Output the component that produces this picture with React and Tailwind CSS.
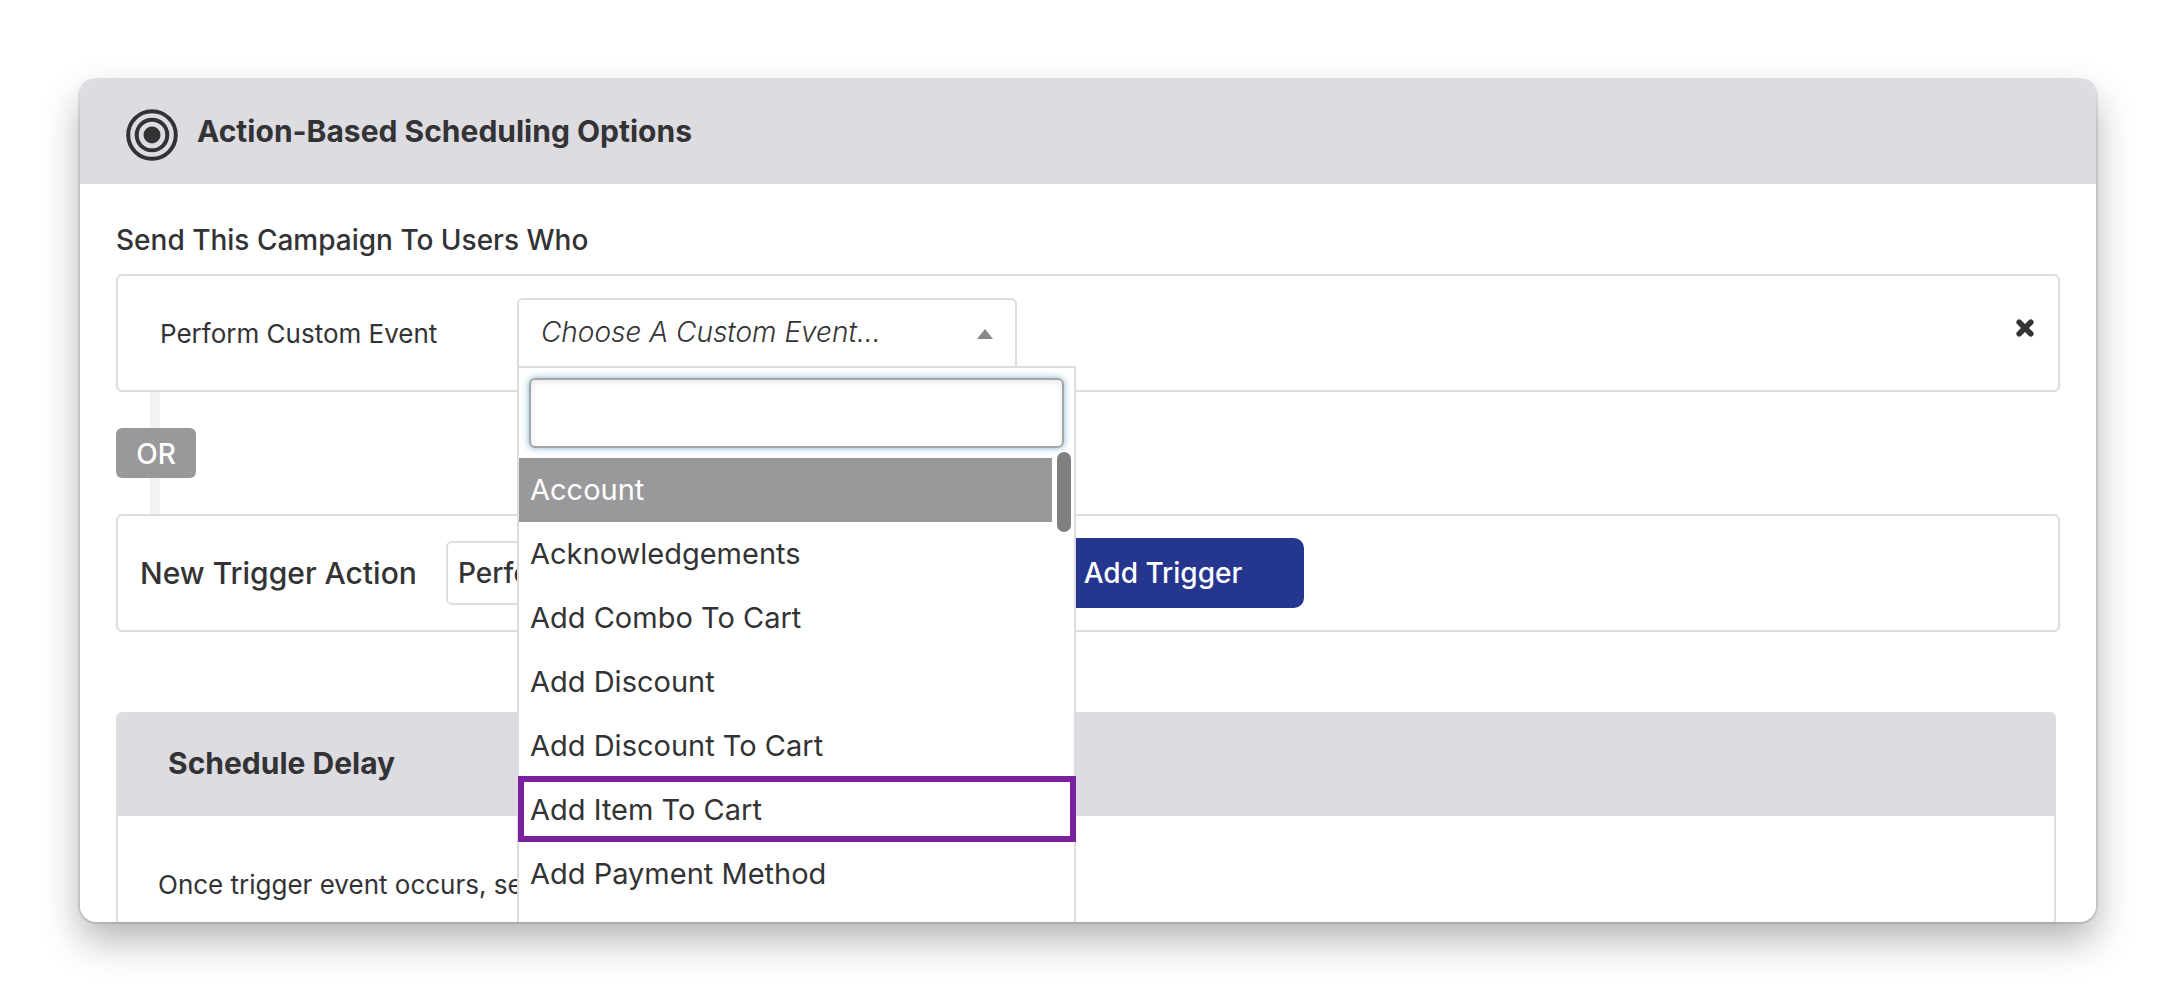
import React from "react";

const EVENTS = [
  "Account",
  "Acknowledgements",
  "Add Combo To Cart",
  "Add Discount",
  "Add Discount To Cart",
  "Add Item To Cart",
  "Add Payment Method",
];

function TargetIcon() {
  return (
    <svg viewBox="0 0 52 52" className="mt-2 size-[52px] shrink-0" fill="none" stroke="currentColor" strokeWidth="4" aria-hidden="true">
      <circle cx="26" cy="26" r="23.8" />
      <circle cx="26" cy="26" r="15.3" />
      <circle cx="26" cy="26" r="8.5" fill="currentColor" stroke="none" />
    </svg>
  );
}

function CrossIcon() {
  return (
    <svg viewBox="0 0 18 18" className="size-[18px]" stroke="currentColor" strokeWidth="5.6" strokeLinecap="round" aria-hidden="true">
      <path d="M3.2 3.2 L14.8 14.8 M14.8 3.2 L3.2 14.8" />
    </svg>
  );
}

function EventOption({ name }) {
  const base = "relative flex h-16 items-center pl-[11px]";
  if (name === "Account") {
    return (
      <li role="option" aria-selected="true" className={`${base} mr-[22px] bg-[#99999b] text-white`}>
        {name}
      </li>
    );
  }
  return (
    <li role="option" aria-selected="false" className={base}>
      {name}
      {name === "Add Item To Cart" && (
        <span className="absolute -top-0.5 -right-0.5 bottom-0 -left-px border-[6px] border-[#7b219f]" />
      )}
    </li>
  );
}

function EventPicker() {
  return (
    <div className="relative w-[500px]">
      <button
        type="button"
        aria-haspopup="listbox"
        aria-expanded="true"
        className="flex h-[70px] w-full items-center justify-between rounded-t-md border-2 border-[#dddce1] bg-white pr-[22px] pb-0.5 pl-[22px] text-[28px] font-light italic"
      >
        Choose A Custom Event...
        <svg viewBox="0 0 16 10" className="mt-1 h-2.5 w-4" aria-hidden="true">
          <path d="M8 0 L16 10 H0 Z" fill="#88888a" />
        </svg>
      </button>
      <div className="absolute top-[68px] left-0 z-10 h-[640px] w-[559px] border-2 border-[#dddce1] bg-white">
        <div className="p-2.5">
          <input
            type="text"
            aria-label="Search custom events"
            className="h-[70px] w-full rounded-md border-2 border-[#a6a6a8] bg-white px-3 text-[29px] shadow-[0_0_7px_rgba(60,140,180,0.65),inset_0_2px_6px_rgba(0,0,0,0.1)] outline-none"
          />
        </div>
        <ul role="listbox" aria-label="Custom events" className="text-[29px]">
          {EVENTS.map((name) => (
            <EventOption key={name} name={name} />
          ))}
        </ul>
        <div className="absolute top-[84px] right-[3px] h-20 w-3.5 rounded-full bg-[#808080]" />
      </div>
    </div>
  );
}

export default function App() {
  return (
    <div className="flex h-screen bg-white p-20 font-['Inter',sans-serif] text-[#333335]">
      <main className="flex-1 overflow-hidden rounded-2xl bg-white shadow-[0_0_0_2px_rgba(0,0,0,0.1),0_18px_38px_rgba(0,0,0,0.3)]">
        <header className="flex h-[104px] items-center gap-[19px] bg-[#dddce1] pb-0.5 pl-[46px]">
          <TargetIcon />
          <h1 className="text-[30px] font-bold">Action-Based Scheduling Options</h1>
        </header>

        <div className="px-9 pt-8">
          <h2 className="mb-[10px] text-[28px] leading-[48px] font-medium">Send This Campaign To Users Who</h2>

          <section className="flex h-[118px] items-center rounded-md border-2 border-[#dddce1]">
            <div className="w-[399px] pl-[42px] text-[26px]">Perform Custom Event</div>
            <EventPicker />
            <button type="button" aria-label="Remove trigger" className="mr-6 mb-2.5 ml-auto">
              <CrossIcon />
            </button>
          </section>

          <div className="flex h-[122px] w-20 flex-col items-center">
            <div className="ml-[-2px] w-2.5 flex-1 bg-[#f3f3f6]" />
            <span className="flex h-[50px] w-full items-center justify-center rounded-md bg-[#99999b] pt-0.5 text-[28px] font-medium text-white">
              OR
            </span>
            <div className="ml-[-2px] w-2.5 flex-1 bg-[#f3f3f6]" />
          </div>

          <section className="flex h-[118px] items-center rounded-md border-2 border-[#dddce1] pl-[22px]">
            <label htmlFor="trigger-action" className="w-[306px] text-[30px] font-medium">
              New Trigger Action
            </label>
            <select
              id="trigger-action"
              className="mr-5 h-16 w-[556px] appearance-none rounded-md border-2 border-[#dddce1] bg-white pl-2.5 text-[28px] font-medium"
            >
              <option>Perform Custom Event</option>
            </select>
            <button type="button" className="h-[70px] w-[282px] rounded-[10px] bg-[#25368f] text-[28px] font-medium text-white">
              Add Trigger
            </button>
          </section>

          <section className="mt-20 mr-1 h-[260px] rounded-t-md border-2 border-[#dddce1]">
            <h2 className="flex h-[102px] items-center bg-[#dddce1] pb-1 pl-[50px] text-[30px] font-bold">Schedule Delay</h2>
            <p className="pt-12 pl-10 text-[26px] leading-[42px]">Once trigger event occurs, se</p>
          </section>
        </div>
      </main>
    </div>
  );
}
